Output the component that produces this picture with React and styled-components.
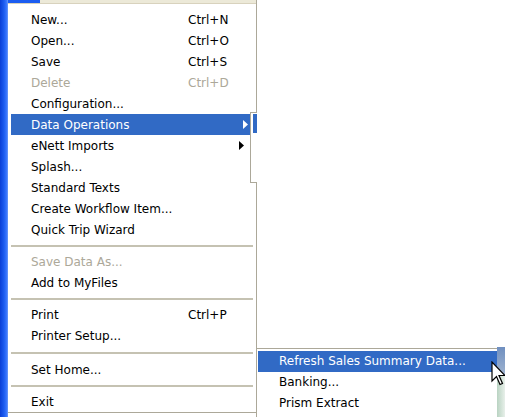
import React from 'react'
import styled, { createGlobalStyle } from 'styled-components'

const GlobalStyle = createGlobalStyle`
  html, body {
    margin: 0;
    padding: 0;
    background: #ffffff;
  }
`

const mainItems = [
  { label: 'New...', shortcut: 'Ctrl+N' },
  { label: 'Open...', shortcut: 'Ctrl+O' },
  { label: 'Save', shortcut: 'Ctrl+S' },
  { label: 'Delete', shortcut: 'Ctrl+D', disabled: true },
  { label: 'Configuration...' },
  { label: 'Data Operations', submenu: true, active: true },
  { label: 'eNett Imports', submenu: true },
  { label: 'Splash...' },
  { label: 'Standard Texts' },
  { label: 'Create Workflow Item...' },
  { label: 'Quick Trip Wizard' },
  { separator: true },
  { label: 'Save Data As...', disabled: true },
  { label: 'Add to MyFiles' },
  { separator: true },
  { label: 'Print', shortcut: 'Ctrl+P' },
  { label: 'Printer Setup...' },
  { separator: true, tall: true },
  { label: 'Set Home...' },
  { separator: true },
  { label: 'Exit' },
]

const subItems = [
  { label: 'Refresh Sales Summary Data...', active: true },
  { label: 'Banking...' },
  { label: 'Prism Extract' },
]

const Arrow = ({ color }) => (
  <svg width="5" height="9" viewBox="0 0 5 9">
    <path d="M0 0 L5 4.5 L0 9 Z" fill={color} />
  </svg>
)

const Cursor = () => (
  <svg width="16" height="26" viewBox="0 0 16 26">
    <path d="M1 1 L1 20 L5.5 15.5 L9 23.5 L11.5 22.5 L8 14.5 L14 14.5 Z" fill="#ffffff" stroke="#000000" strokeWidth="1.2" strokeLinejoin="miter" />
  </svg>
)

export default function App() {
  return (
    <>
      <GlobalStyle />
      <Screen>
        <LeftStrip />
        <Menu>
          <TopEdge />
          <MenuBody>
            {mainItems.map((item, i) =>
              item.separator ? (
                <Separator key={i} $tall={item.tall} />
              ) : (
                <Item key={i} $active={item.active} $disabled={item.disabled}>
                  <Label>{item.label}</Label>
                  <Shortcut>{item.shortcut}</Shortcut>
                  <ArrowCell>
                    {item.submenu && <Arrow color={item.active ? '#ffffff' : '#000000'} />}
                  </ArrowCell>
                </Item>
              )
            )}
          </MenuBody>
        </Menu>
        <Notch>
          <NotchHighlight />
        </Notch>
        <SubMenu>
          {subItems.map((item, i) => (
            <SubItem key={i} $active={item.active}>
              {item.label}
            </SubItem>
          ))}
        </SubMenu>
        <BackWindow>
          <BackTitle />
          <BackBody />
        </BackWindow>
        <CursorSpot>
          <Cursor />
        </CursorSpot>
      </Screen>
    </>
  )
}

const Screen = styled.div`
  position: relative;
  display: flex;
  width: 505px;
  height: 417px;
  overflow: hidden;
  background: #ffffff;
  font-family: 'DejaVu Sans', 'Liberation Sans', sans-serif;
  font-size: 12px;
  color: #000000;
`

const LeftStrip = styled.div`
  width: 8px;
  flex: none;
  background: linear-gradient(to right, #0a3fd6 0, #1c5cf0 4px, #3f7bff 7px, #7aa4f5 8px);
`

const Menu = styled.div`
  width: 248px;
  height: 412px;
  display: flex;
  flex-direction: column;
  border-right: 1px solid #aca899;
  border-bottom: 1px solid #aca899;
`

const TopEdge = styled.div`
  height: 3px;
  flex: none;
  background: linear-gradient(to right, #1c5cf0 0, #1c5cf0 32px, #ece9d8 32px);
  border-bottom: 1px solid #d8d2bd;
`

const MenuBody = styled.div`
  display: flex;
  flex-direction: column;
  padding: 5px 3px 0 3px;
`

const Item = styled.div`
  display: grid;
  grid-template-columns: 157px 1fr 14px;
  align-items: center;
  height: 21px;
  padding-left: 20px;
  margin-right: ${p => (p.$active ? '-4px' : '0')};
  background: ${p => (p.$active ? '#316ac5' : 'transparent')};
  color: ${p => (p.$active ? '#ffffff' : p.$disabled ? '#aca899' : '#000000')};
`

const Label = styled.span`
  white-space: nowrap;
`

const Shortcut = styled.span`
  white-space: nowrap;
`

const ArrowCell = styled.span`
  display: flex;
  align-items: center;
`

const Separator = styled.div`
  height: ${p => (p.$tall ? '13px' : '11px')};
  display: flex;
  align-items: center;
  &::before {
    content: '';
    flex: 1;
    height: 2px;
    background: #c5c2b2;
  }
`

const Notch = styled.div`
  position: absolute;
  left: 250px;
  top: 112px;
  width: 6px;
  height: 69px;
  background: #ffffff;
  border-left: 1px solid #aca899;
  border-top: 1px solid #aca899;
  border-bottom: 1px solid #aca899;
`

const NotchHighlight = styled.div`
  margin: 1px 0 0 2px;
  height: 19px;
  background: #316ac5;
`

const SubMenu = styled.div`
  position: absolute;
  left: 256px;
  top: 348px;
  width: 239px;
  height: 80px;
  padding: 2px 0 0 1px;
  background: #ffffff;
  border-left: 1px solid #aca899;
  border-top: 1px solid #aca899;
  border-right: 1px solid #aca899;
  display: flex;
  flex-direction: column;
`

const SubItem = styled.div`
  height: 21px;
  line-height: 21px;
  padding-left: 21px;
  white-space: nowrap;
  background: ${p => (p.$active ? '#316ac5' : 'transparent')};
  color: ${p => (p.$active ? '#ffffff' : '#000000')};
`

const BackWindow = styled.div`
  position: absolute;
  left: 497px;
  top: 347px;
  width: 8px;
  height: 70px;
  display: flex;
  flex-direction: column;
`

const BackTitle = styled.div`
  height: 28px;
  background: linear-gradient(to bottom, #6f8fc0, #9fb3cf);
`

const BackBody = styled.div`
  flex: 1;
  background: linear-gradient(to right, #b9d3c2, #e8f0ea);
`

const CursorSpot = styled.div`
  position: absolute;
  left: 491px;
  top: 361px;
`
